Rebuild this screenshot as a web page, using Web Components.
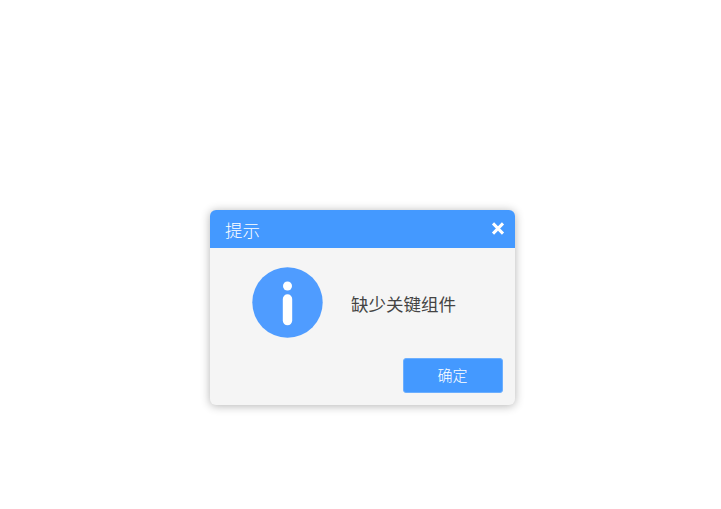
<!DOCTYPE html>
<html lang="zh">
<head>
<meta charset="utf-8">
<title>提示</title>
<style>
html, body { margin: 0; padding: 0; height: 100%; background: #fff; overflow: hidden; }
body { font-family: "Noto Sans CJK SC", "Liberation Sans", sans-serif; padding: 210px 0 0 210px; box-sizing: border-box; height: 509px; }
</style>
</head>
<body>
<msg-dialog heading="提示">
    <info-icon slot="icon"></info-icon>
    缺少关键组件
    <msg-button slot="actions">确定</msg-button>
</msg-dialog>

<script>
class InfoIcon extends HTMLElement {
    constructor() {
        super();
        this.shadowDOM = this.attachShadow({mode: "open"});
    }

    connectedCallback(){
        this.shadowDOM.innerHTML = `
        <style>
        :host { display: block; width: 71px; height: 71px; }
        svg { display: block; }
        </style>
        <svg width="71" height="71" viewBox="0 0 71 71">
            <circle cx="35.5" cy="35.5" r="35.2" fill="#4f9cff"/>
            <circle cx="35.5" cy="19" r="4.5" fill="#fff"/>
            <rect x="30.8" y="27.3" width="9.4" height="31" rx="4.7" fill="#fff"/>
        </svg>
        `;
    }
}

class MsgButton extends HTMLElement {
    constructor() {
        super();
        this.shadowDOM = this.attachShadow({mode: "open"});
    }

    connectedCallback(){
        this.shadowDOM.innerHTML = `
        <style>
        :host { display: block; }
        button {
            display: block;
            width: 100px;
            height: 35px;
            padding: 0 0 2px;
            box-sizing: border-box;
            background: #4499ff;
            color: #fff;
            border: 1px solid #6cafff;
            border-radius: 3px;
            font: 300 15px "Noto Sans CJK SC", sans-serif;
            cursor: pointer;
        }
        </style>
        <button type="button"><slot></slot></button>
        `;
    }
}

class MsgDialog extends HTMLElement {
    constructor() {
        super();
        this.shadowDOM = this.attachShadow({mode: "open"});
    }

    connectedCallback(){
        this.shadowDOM.innerHTML = `
        <style>
        :host {
            display: block;
            width: 305px;
            height: 195px;
            background: #f5f5f5;
            border-radius: 6px;
            box-shadow: 0 1px 10px rgba(0, 0, 0, 0.3);
            overflow: hidden;
            font-family: "Noto Sans CJK SC", sans-serif;
        }
        .head {
            height: 38px;
            box-sizing: border-box;
            padding: 0 10px 0 15px;
            background: #4499ff;
            color: #fff;
            font-size: 17.5px;
            font-weight: 300;
            display: flex;
            align-items: center;
            justify-content: space-between;
        }
        .head svg { display: block; margin-bottom: 1px; }
        .body {
            display: flex;
            align-items: center;
            gap: 28px;
            padding: 19px 0 0 42px;
            font-size: 17.5px;
            font-weight: 400;
            color: #444;
        }
        .body span { padding-top: 2px; }
        .actions {
            display: flex;
            justify-content: flex-end;
            padding: 20px 12.5px 0 0;
        }
        </style>
        <div class="head">
            <span>${this.getAttribute("heading")}</span>
            <svg width="14" height="13" viewBox="0 0 14 13"><path d="M2 1.4l10 10.2M12 1.4L2 11.6" stroke="#fff" stroke-width="3"/></svg>
        </div>
        <div class="body">
            <slot name="icon"></slot>
            <span><slot></slot></span>
        </div>
        <div class="actions"><slot name="actions"></slot></div>
        `;
    }
}

customElements.define("info-icon", InfoIcon);
customElements.define("msg-button", MsgButton);
customElements.define("msg-dialog", MsgDialog);
</script>
</body>
</html>
